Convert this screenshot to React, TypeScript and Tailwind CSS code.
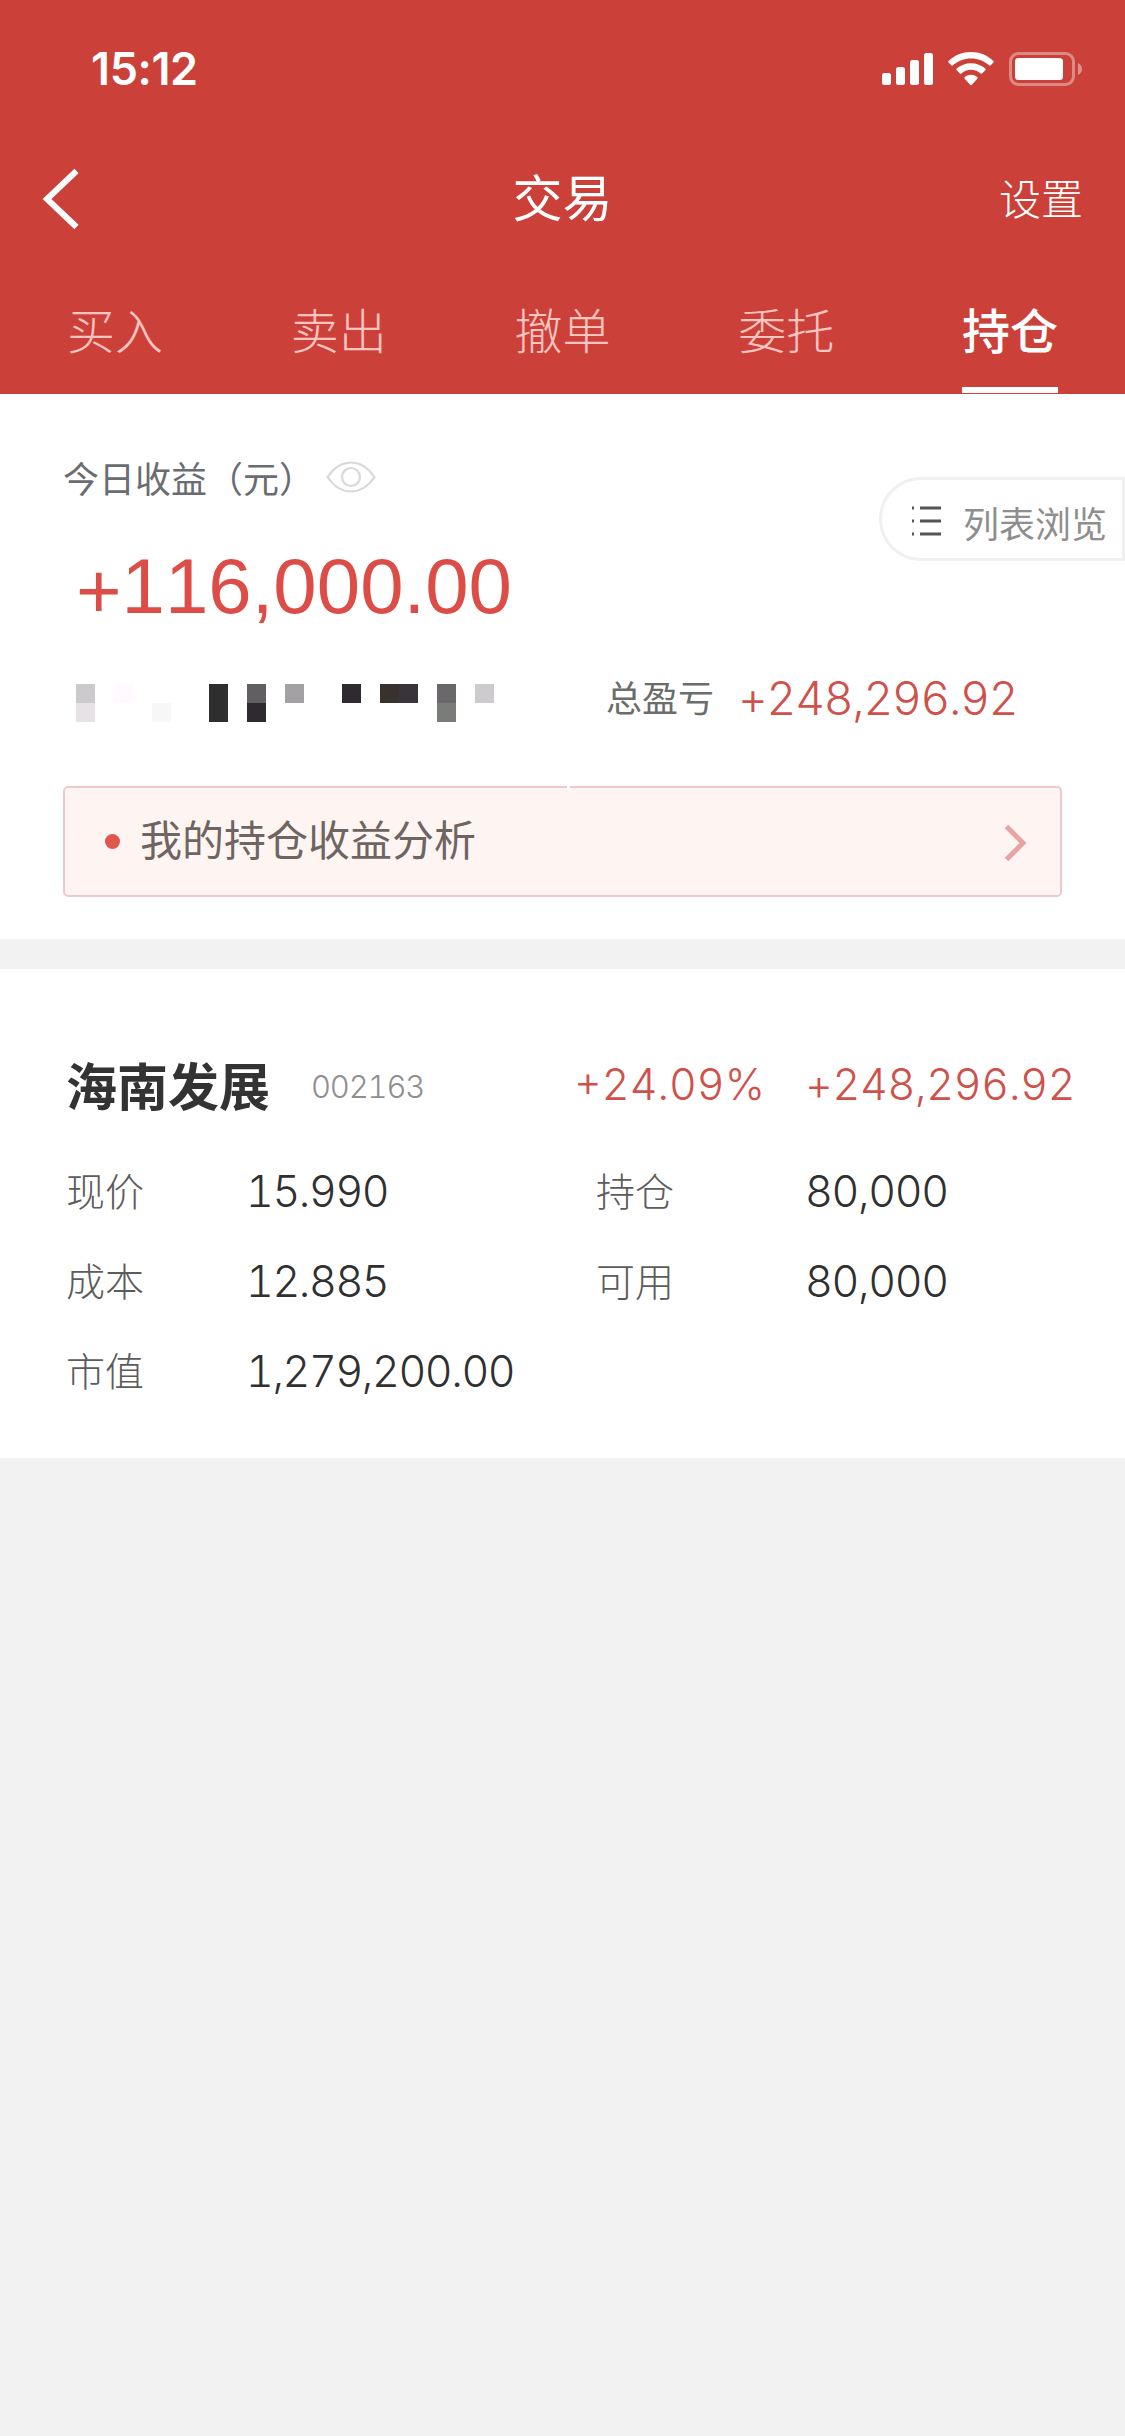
const CJK = "font-['Noto_Sans_CJK_SC',sans-serif]";
const NUM = "font-['Inter',sans-serif] tabular-nums font-[350]";

function StatusBar() {
  return (
    <div className="flex h-[138px] items-center justify-between pl-[91px] pr-[43px]">
      <span className="-mt-px font-['Inter',sans-serif] text-[45px] font-semibold leading-none tracking-[-0.4px]">15:12</span>
      <div className="flex items-center">
        <svg width="51" height="34" viewBox="0 0 51 34" fill="#fff">
          <rect x="0" y="21" width="9" height="12" rx="2.5" />
          <rect x="14" y="15" width="9" height="18" rx="2.5" />
          <rect x="28" y="8" width="9" height="25" rx="2.5" />
          <rect x="42" y="1" width="9" height="32" rx="2.5" />
        </svg>
        <svg className="ml-[15px]" width="46" height="34" viewBox="0 0 46 34" fill="#fff">
          <path d="M23 0C14.500 0 6.500 3.300.600 8.900a1.200 1.200 0 0 0 0 1.700l2.700 2.700c.5.500 1.200.5 1.700 0C9.800 9 16.100 6.500 23 6.500s13.200 2.500 18 6.800c.5.500 1.200.5 1.700 0l2.700-2.700a1.200 1.200 0 0 0 0-1.700C39.500 3.300 31.500 0 23 0z" />
          <path d="M23 11.200c-5.400 0-10.400 2-14.300 5.400-.5.500-.5 1.200 0 1.700l3 3c.5.500 1.100.5 1.600.1 2.600-2.300 6-3.700 9.700-3.700s7.100 1.400 9.700 3.700c.5.400 1.100.4 1.600-.1l3-3c.5-.5.5-1.200 0-1.700-3.900-3.400-8.900-5.400-14.300-5.400z" />
          <path d="M23 22.800c-2.400 0-4.600.9-6.200 2.300-.5.400-.5 1.100-.1 1.600l5.400 6.100c.5.500 1.300.5 1.800 0l5.400-6.100c.4-.5.4-1.200-.1-1.600a9.300 9.300 0 0 0-6.200-2.300z" />
        </svg>
        <svg className="ml-[15px]" width="73" height="34" viewBox="0 0 73 34" fill="none">
          <rect x="1.500" y="1.500" width="63" height="31" rx="8" stroke="#fff" strokeOpacity=".38" strokeWidth="3" />
          <rect x="6" y="6" width="48" height="22" rx="3.500" fill="#fff" />
          <path d="M69 11c2.500 1 4 3.400 4 6s-1.500 5-4 6z" fill="#fff" fillOpacity=".42" />
        </svg>
      </div>
    </div>
  );
}

function Header() {
  const tabs = ["买入", "卖出", "撤单", "委托", "持仓"];
  return (
    <header className="h-[394px] bg-[#cb4139] text-white">
      <StatusBar />
      <div className="grid h-[122px] grid-cols-3 items-center pl-[42px] pr-[42px]">
        <svg width="38" height="62" viewBox="0 0 38 62" fill="none" stroke="#fff" strokeWidth="6">
          <path d="M34.500 3 5 31l29.500 28" />
        </svg>
        <h1 className="-mt-[8px] text-center text-[50px] font-normal leading-none">交易</h1>
        <span className="-mt-[5px] text-right text-[42px] font-light leading-none">设置</span>
      </div>
      <nav className="grid h-[134px] grid-cols-5 px-[3px]">
        {tabs.map((t) =>
          t === "持仓" ? (
            <div key={t} className="flex flex-col items-center pt-[44px] text-[48px] font-medium leading-none">
              {t}
              <span className="mt-[35px] h-[6px] w-[96px] bg-white" />
            </div>
          ) : (
            <div key={t} className="pt-[44px] text-center text-[48px] font-light leading-none text-[#ffc4c0]">{t}</div>
          ),
        )}
      </nav>
    </header>
  );
}

const mosaic: Record<string, string> = {
  "0-0": "#cdcacd", "0-2": "#fefaff", "0-7": "#2e2e2e", "0-9": "#615f62", "0-11": "#a3a1a4", "0-14": "#2f2a2f",
  "0-16": "#38322e", "0-17": "#39343a", "0-19": "#6a686b", "0-21": "#cdcbce",
  "1-0": "#e6e2e6", "1-4": "#f7f7f7", "1-7": "#2e2e2e", "1-9": "#2f2a2f", "1-19": "#7a7c79",
};

function Mosaic() {
  return (
    <div className="ml-[13px] mt-2 grid w-[418px] [grid-template-columns:repeat(22,19px)]">
      {Array.from({ length: 44 }, (_, i) => (
        <span key={i} className="h-[19px]" style={{ backgroundColor: mosaic[`${Math.floor(i / 22)}-${i % 22}`] }} />
      ))}
    </div>
  );
}

function Summary() {
  return (
    <section className="relative h-[545px] bg-white pl-[63px] pr-[63px] pt-[63px]">
      <div className="flex h-10 items-center text-[36px] font-normal leading-none text-[#6b6c70]">
        <span>今日收益（元）</span>
        <svg className="ml-[11px]" width="50" height="32" viewBox="0 0 50 32" fill="none" stroke="#d9d9d9" strokeWidth="2.200">
          <path d="M1.500 16C8 6.500 16 1.500 25 1.500S42 6.500 48.500 16C42 25.500 34 30.500 25 30.500S8 25.500 1.500 16z" />
          <circle cx="25" cy="16" r="9" />
        </svg>
      </div>
      <div className="mt-[49px] flex pl-[13px] font-['Liberation_Sans',sans-serif] text-[78px] leading-[80px] text-[#dc4d48] [font-kerning:none]">
        <span className="pt-[5px]">+</span>
        <span className="h-[80px]">116,000.00</span>
      </div>
      <div className="mt-[45px] flex h-[65px] items-start">
        <Mosaic />
        <span className="ml-[112px] mt-[2px] text-[36px] leading-none text-[#6b6d6b]">总盈亏</span>
        <span className={`${NUM} ml-[24px] text-[46px] leading-[44px] tracking-[-1.2px] text-[#cf514c]`}>+248,296.92</span>
      </div>
      <div className="mt-[45px] flex h-[111px] w-[999px] items-center rounded-[5px] border-2 border-[#eec8cc] bg-[#fef5f3] pl-[40px] pr-[33px]">
        <span className="size-[15px] rounded-full bg-[#e0564c]" />
        <span className="-mt-[7px] ml-[20px] text-[42px] leading-none text-[#6e6562]">我的持仓收益分析</span>
        <svg className="ml-auto mt-[2px]" width="23" height="38" viewBox="0 0 23 38" fill="none" stroke="#e8a3a3" strokeWidth="5">
          <path d="M2.500 2.500 19 19 2.500 35.500" />
        </svg>
      </div>
      <span className="absolute left-[567px] top-[391px] h-[4px] w-[3px] bg-white" />
      <div className="absolute right-0 top-[83px] flex h-[84px] w-[246px] items-center rounded-l-full border-[3px] border-[#f0f0f0] bg-white pl-[30px]">
        <svg className="mt-[3px]" width="30" height="30" viewBox="0 0 30 30" fill="#555">
          <path d="M0 .5h2v3H0zM8 .5h21v3H8zM0 13.500h2v3H0zM8 13.500h21v3H8zM0 26.500h2v3H0zM8 26.500h21v3H8z" />
        </svg>
        <span className="ml-[21px] mt-[5px] text-[36px] leading-none text-[#8e8e8e]">列表浏览</span>
      </div>
    </section>
  );
}

function Holding() {
  const rows = [
    ["现价", "15.990", "持仓", "80,000"],
    ["成本", "12.885", "可用", "80,000"],
    ["市值", "1,279,200.00", "", ""],
  ];
  return (
    <section className="mt-[30px] h-[489px] bg-white pl-[66px] pt-[90px]">
      <div className="flex h-[50px] items-center">
        <h2 className="w-[245px] text-[51px] font-bold leading-none text-[#333]">海南发展</h2>
        <span className={`${NUM} mt-1 w-[263px] text-[31px] leading-none tracking-[-1.2px] text-[#8f8f8f]`}>002163</span>
        <span className={`${NUM} w-[231px] text-[43px] leading-none text-[#cf514c]`}>+24.09%</span>
        <span className={`${NUM} text-[43px] leading-none tracking-[-0.3px] text-[#cf514c]`}>+248,296.92</span>
      </div>
      <div className="mt-[37px]">
        {rows.map(([a, b, c, d]) => (
          <div key={a} className="flex h-[90px] items-center">
            <span className="-mt-[3px] w-[180px] text-[39px] font-light leading-none text-[#5c5c5c]">{a}</span>
            <span className={`${NUM} w-[350px] text-[43px] leading-none tracking-[-1.4px] text-[#303030]`}>{b}</span>
            <span className="-mt-[3px] w-[209px] text-[39px] font-light leading-none text-[#5c5c5c]">{c}</span>
            <span className={`${NUM} text-[43px] leading-none tracking-[-1.3px] text-[#303030]`}>{d}</span>
          </div>
        ))}
      </div>
    </section>
  );
}

export default function App() {
  return (
    <div className={`${CJK} min-h-screen w-[1125px] bg-[#f2f2f2]`}>
      <Header />
      <Summary />
      <Holding />
    </div>
  );
}
